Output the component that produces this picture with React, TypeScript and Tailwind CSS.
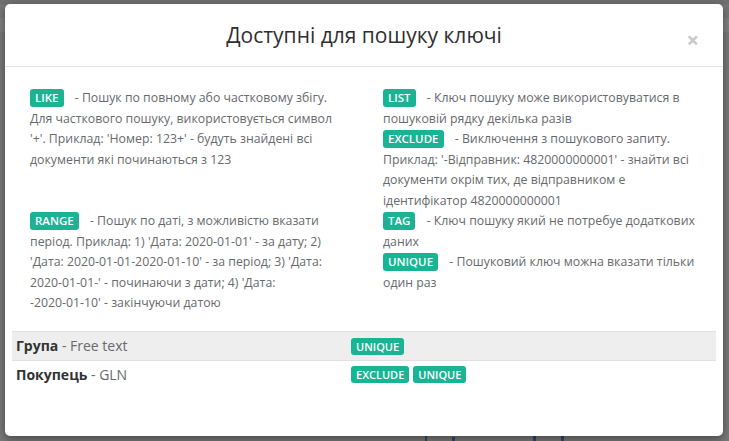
import React from 'react'

const font = { fontFamily: '"Open Sans", "Noto Sans", sans-serif' }

function Badge({ children, small }: { children: React.ReactNode; small?: boolean }) {
  return (
    <span
      className={
        small
          ? 'inline-block rounded-[3px] bg-[#1ab394] px-[5px] text-[11px] font-semibold leading-[17px] text-white'
          : 'mr-2 inline-block rounded-[3px] bg-[#1ab394] px-[5px] text-[11.5px] font-semibold leading-[18px] text-white'
      }
    >
      {children}
    </span>
  )
}

function Desc({ tag, children }: { tag: string; children: React.ReactNode }) {
  return (
    <p>
      <Badge>{tag}</Badge> - {children}
    </p>
  )
}

export default function App() {
  return (
    <div className="relative h-[441px] w-[729px] overflow-hidden bg-[#777]" style={font}>
      {/* page under the backdrop */}
      <div className="h-[4px] bg-[#6f6f6f]" />
      <div className="mt-[14px] h-[14px] bg-[#7f7f7f]" />
      <div className="absolute bottom-0 left-[425px] h-[6px] w-[2px] bg-[#2f4a6a]" />
      <div className="absolute bottom-0 left-[452px] h-[4px] w-[3px] bg-[#2f4a6a]" />
      <div className="absolute bottom-0 left-[533px] h-[5px] w-[3px] bg-[#2f4a6a]" />
      <div className="absolute bottom-0 left-[561px] h-[5px] w-[3px] bg-[#2f4a6a]" />

      <div className="absolute left-[5px] top-[4px] flex h-[432px] w-[718px] flex-col rounded-[5px] bg-white shadow-[0_3px_9px_rgba(0,0,0,0.4)]">
        <div className="relative flex h-[63px] items-center justify-center border-b border-[#e5e5e5]">
          <h4 className="text-[21px] leading-none text-[#2f2f2f]">Доступні для пошуку ключі</h4>
          <button className="absolute right-[24px] top-[24px] text-[22px] font-bold leading-none text-[#c8c8c8]">×</button>
        </div>

        <div className="px-[7px] pt-[21px]">
          <div className="grid grid-cols-[305px_322px] gap-x-[48px] px-[18px] text-[12.3px] leading-[20.5px] text-[#676a6c]">
            <div>
              <Desc tag="LIKE">
                Пошук по повному або частковому збігу. Для часткового пошуку, використовується символ '+'. Приклад: 'Номер:
                123+' - будуть знайдені всі документи які починаються з 123
              </Desc>
            </div>
            <div>
              <Desc tag="LIST">Ключ пошуку може використовуватися в пошуковій рядку декілька разів</Desc>
              <Desc tag="EXCLUDE">
                Виключення з пошукового запиту. Приклад: '-Відправник: 4820000000001' - знайти всі документи окрім тих, де
                відправником е ідентифікатор 4820000000001
              </Desc>
            </div>
            <div>
              <Desc tag="RANGE">
                Пошук по даті, з можливістю вказати період. Приклад: 1) 'Дата: 2020-01-01' - за дату; 2) 'Дата:
                2020-01-01-2020-01-10' - за період; 3) 'Дата: 2020-01-01-' - починаючи з дати; 4) 'Дата:{' '}
                <span className="whitespace-nowrap">-2020-01-10'</span> - закінчуючи датою
              </Desc>
            </div>
            <div>
              <Desc tag="TAG">Ключ пошуку який не потребуе додаткових даних</Desc>
              <Desc tag="UNIQUE">Пошуковий ключ можна вказати тільки один раз</Desc>
            </div>
          </div>

          <table className="mt-[17px] w-full text-[14px] leading-[20px] text-[#676a6c]">
            <tbody>
              <tr className="border-y border-[#e0e0e0] bg-[#eeeeee]">
                <td className="w-[335px] px-[4px] py-[4px]">
                  <b className="text-[#333]">Група</b> - Free text
                </td>
                <td className="px-[4px] py-[4px]">
                  <Badge small>UNIQUE</Badge>
                </td>
              </tr>
              <tr>
                <td className="px-[4px] py-[4px]">
                  <b className="text-[#333]">Покупець</b> - GLN
                </td>
                <td className="px-[4px] py-[4px]">
                  <span className="flex gap-[4px]">
                    <Badge small>EXCLUDE</Badge>
                    <Badge small>UNIQUE</Badge>
                  </span>
                </td>
              </tr>
            </tbody>
          </table>
        </div>
      </div>
    </div>
  )
}
